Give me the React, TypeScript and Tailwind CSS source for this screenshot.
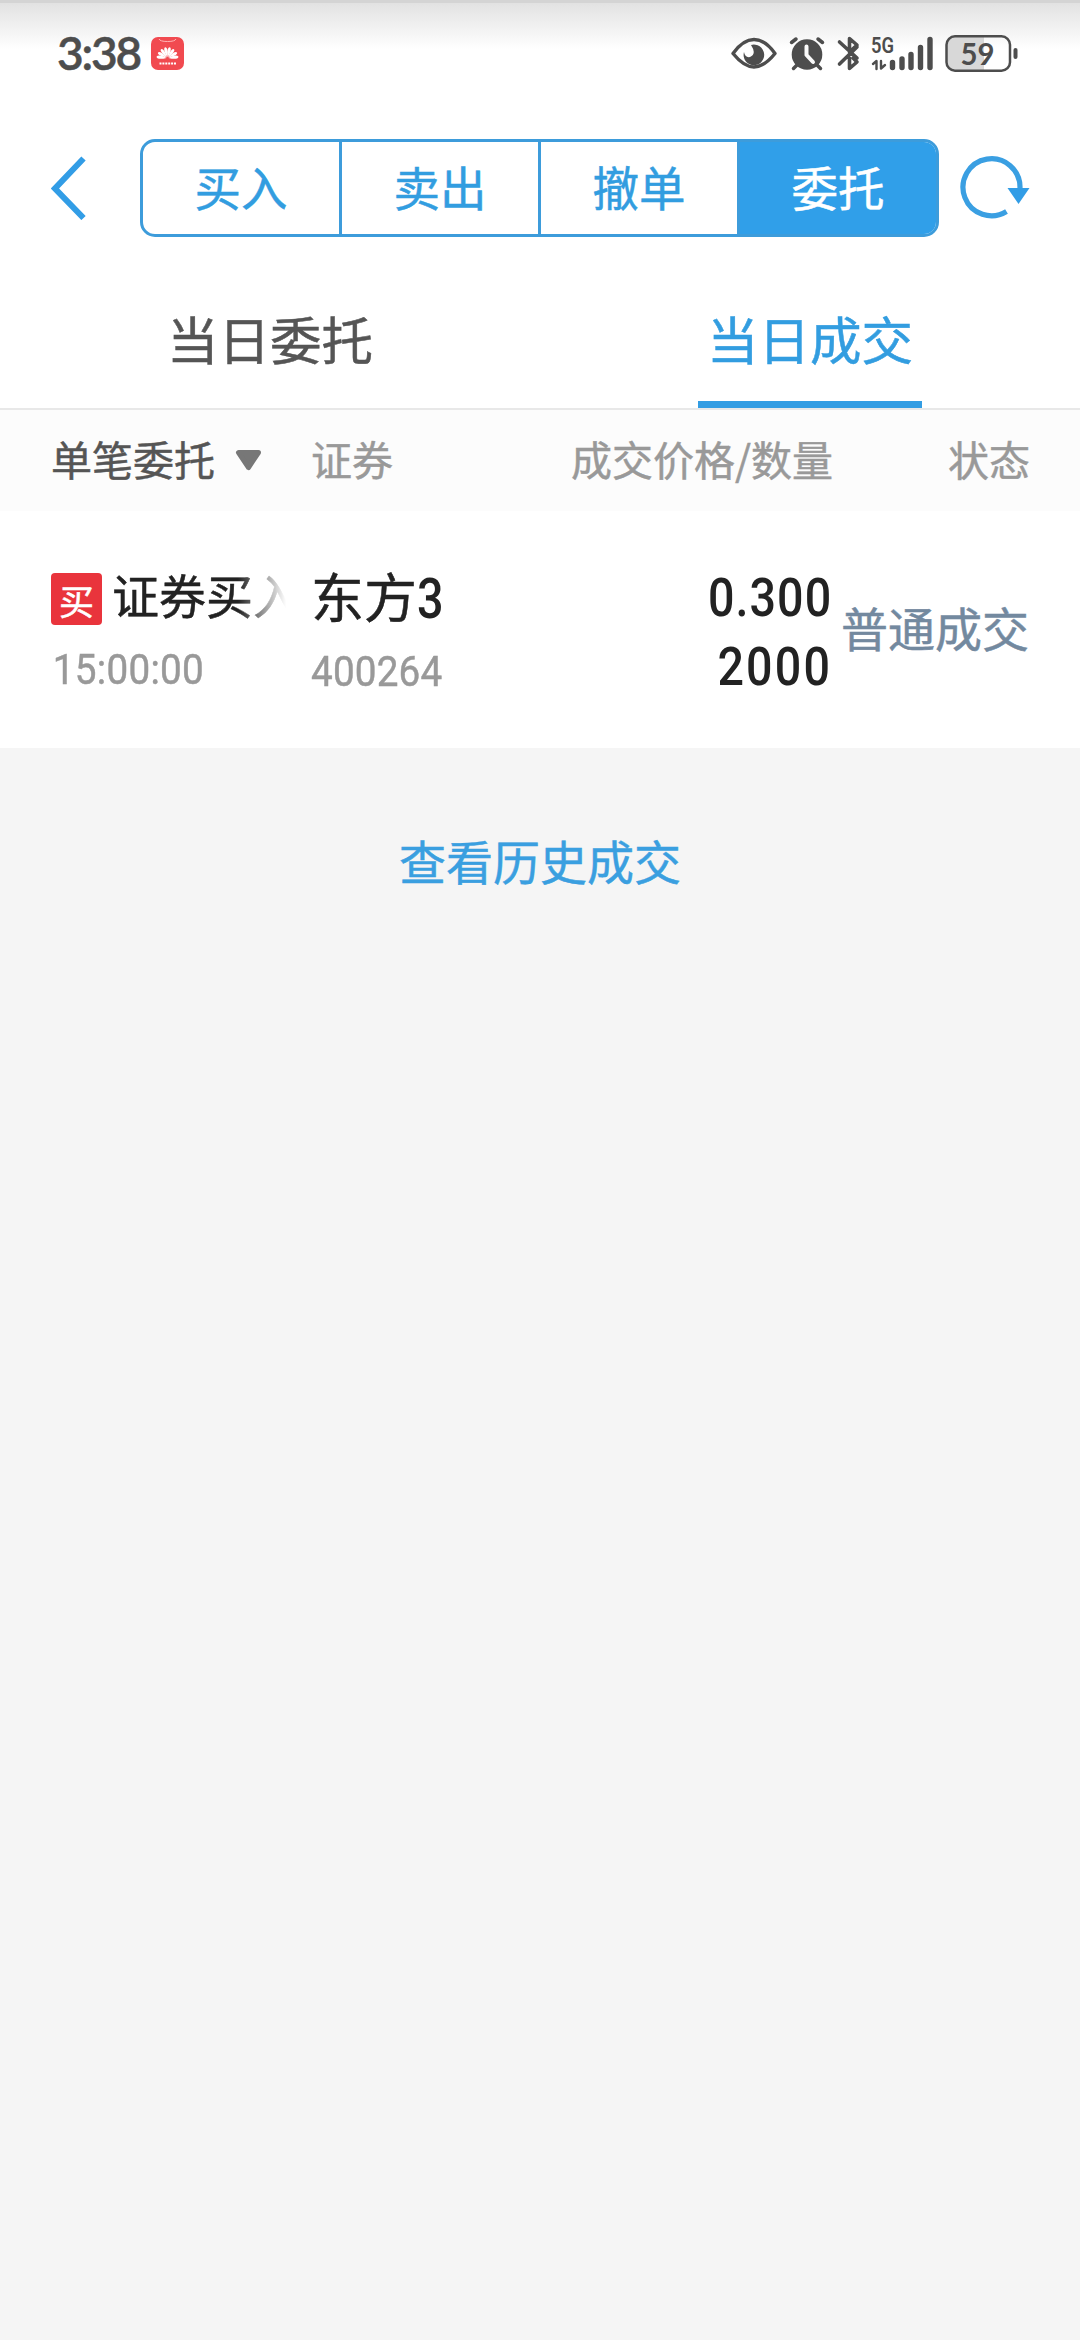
import React from "react";

const segments = ["买入", "卖出", "撤单", "委托"];

function StatusBar() {
  return (
    <div className="flex h-[103px] items-center border-t-[3px] border-[#d4d4d4] bg-linear-to-b from-[#e2e2e2] to-white to-[46px] pr-[60px] pl-[57px] text-[#4d4d4d]">
      <span className="w-[94px] font-['Lato'] text-[46px] leading-none font-semibold tracking-[-2.2px] whitespace-nowrap">3:38</span>
      <svg className="h-[33px] w-[33px]" viewBox="0 0 33 33">
        <rect width="33" height="33" rx="7" fill="#f14a50" />
        <path d="M8 2Q9 4.500 16.500 4.500T25 2" fill="none" stroke="#ffb5b5" strokeWidth="1" />
        <g fill="#fff">
          {[-84, -60, -36, -12, 12, 36, 60, 84].map((a) => (
            <path key={a} d="M16.500 21Q14.200 15 15.300 12Q16.500 10 17.700 12Q18.800 15 16.500 21Z" transform={`rotate(${a} 16.500 21) translate(0 -1)`} />
          ))}
        </g>
        <path d="M8.500 26.500H25" stroke="#fff" strokeWidth="2" strokeDasharray="2 .9" />
      </svg>
      <svg className="ml-auto h-[38px] w-[290px]" viewBox="730 34 290 38" fill="none" stroke="#4d4d4d" strokeLinecap="round" strokeLinejoin="round">
        <path d="M733 53.500Q743 39.500 754 39.500T775 53.500Q764 67 754 67T733 53.500Z" strokeWidth="3.400" />
        <path d="M751 45A10.300 10.300 0 1 1 744 52Q745 58 750 57Q757 54 751 45Z" fill="#4d4d4d" stroke="none" />
        <circle cx="807" cy="54.500" r="15.300" fill="#4d4d4d" stroke="none" />
        <path d="M791.500 42.500L796 39M822.500 42.500L818 39M797 65L793.500 68.500M817 65L820.500 68.500" strokeWidth="3.500" />
        <path d="M806.500 46.500V55L813 62" stroke="#fafafa" strokeWidth="4" />
        <path d="M839.500 42L857 58M839.500 64L857 47M849.500 51V38.500L857 45L849.500 52M849.500 58V68.500L857 62L853 58" strokeWidth="3.600" />
        <path d="M892.500 62.500V67.500M902 59V67.500M911 54.500V67.500M920.500 47.500V67.500M930 39.500V67.500" strokeWidth="5.400" />
        <path d="M873 64L876.500 61V69M881 61V68.500L885 65" strokeWidth="2.400" />
        <path d="M955 37H984V70H955Q947 70 947 62V45Q947 37 955 37Z" fill="#d8d8d8" stroke="none" />
        <rect x="946.500" y="36.300" width="63.500" height="34.400" rx="8.500" strokeWidth="2.500" />
        <path d="M1015.500 50V57" strokeWidth="4" />
        <text x="871" y="53" className="font-['Roboto']" fontSize="22" fontWeight="600" textLength="23" lengthAdjust="spacingAndGlyphs" fill="#4d4d4d" stroke="none">5G</text>
        <text x="977.500" y="64.500" className="font-['Lato']" fontSize="31" fontWeight="700" textAnchor="middle" textLength="34" lengthAdjust="spacingAndGlyphs" fill="#4d4d4d" stroke="none">59</text>
      </svg>
    </div>
  );
}

function NavBar() {
  return (
    <div className="flex h-[170px] items-center pl-[51px]">
      <svg className="h-[64px] w-[36px]" viewBox="0 0 36 64" fill="none" stroke="#329de6" strokeWidth="6">
        <path d="M32.500 2.500L4 32.500L32.500 62" />
      </svg>
      <div className="ml-[53px] flex h-[98px] w-[799px] overflow-hidden rounded-[15px] border-[3px] border-[#3d9cdb]">
        {segments.map((label, i) => (
          <div
            key={label}
            className={
              "flex flex-1 items-center justify-center pb-[4px] text-[46.500px] leading-none " +
              (i === 3 ? "bg-[#309fe9] text-white" : "border-r-[3px] border-[#3d9cdb] text-[#329de0]")
            }
          >
            {label}
          </div>
        ))}
      </div>
      <svg className="ml-[21px] h-[66px] w-[72px]" viewBox="0 0 72 66">
        <path d="M46.500 56.500A28.500 28.500 0 1 1 60 33" fill="none" stroke="#3a9fe2" strokeWidth="5.200" />
        <path d="M47.500 33H69.500L58.500 49Z" fill="#329de6" />
      </svg>
    </div>
  );
}

export default function App() {
  return (
    <div className="min-h-[2340px] w-[1080px] bg-[#f5f5f5] font-['Noto_Sans_CJK_SC',sans-serif] [-webkit-text-stroke-width:0.5px]">
      <div className="bg-white">
        <StatusBar />
        <NavBar />
        <div className="grid h-[137px] grid-cols-2 border-b-2 border-[#e8e8e8] text-[51.500px] leading-none text-[#555]">
          <div className="flex items-center justify-center pb-[6px]">当日委托</div>
          <div className="flex flex-col items-center text-[#329de0]">
            <div className="flex flex-1 items-center pt-px">当日成交</div>
            <div className="h-[7px] w-[224px] bg-[#339de3]" />
          </div>
        </div>
        <div className="flex h-[101px] items-center bg-[#fcfcfc] pr-[50px] pb-[5px] pl-[51px] text-[41px] leading-none text-[#999]">
          <div className="flex w-[260px] items-center text-[#555]">
            单笔委托
            <svg className="mt-[3px] ml-[20px] h-[22px] w-[28px]" viewBox="0 0 28 22">
              <path d="M3.500 3.500H23.500L13.500 18.500Z" fill="#777" stroke="#777" strokeWidth="5" strokeLinejoin="round" />
            </svg>
          </div>
          <div>证券</div>
          <div className="ml-auto">成交价格/数量</div>
          <div className="w-[197px] text-right">状态</div>
        </div>
        <div className="flex h-[237px] pr-[51px] pl-[51px] text-[#222]">
          <div className="w-[260px] pt-[54px]">
            <div className="flex items-start">
              <div className="mt-[8px] flex h-[52px] w-[51px] items-center justify-center rounded-sm bg-[#e9343c] text-[35px] leading-none text-white">买</div>
              <div className="ml-[10px] text-[47px] leading-[57px] whitespace-nowrap [mask-image:linear-gradient(to_right,#000_126px,transparent_174px)]">证券买入</div>
            </div>
            <div className="mt-[23px] w-fit origin-left scale-x-[.92] pl-[2px] font-['Roboto'] text-[42px] leading-[44px] tracking-[0.3px] text-[#999]">15:00:00</div>
          </div>
          <div className="pt-[56px]">
            <div className="text-[53px] leading-[56px]">
              东方<span className="inline-block origin-left scale-x-[.85] font-['Roboto'] text-[55px] leading-[56px] font-medium [-webkit-text-stroke-width:0]">3</span>
            </div>
            <div className="mt-[23px] w-fit origin-left scale-x-[.92] font-['Roboto'] text-[42px] leading-[44px] tracking-[0.2px] text-[#999]">400264</div>
          </div>
          <div className="ml-auto origin-right scale-x-[.88] pt-[53px] text-right font-['Roboto'] text-[53px] leading-[69px] font-medium [-webkit-text-stroke-width:0]">
            <div className="tracking-[1.200px]">0.300</div>
            <div className="tracking-[2.500px]">2000</div>
          </div>
          <div className="flex w-[197px] justify-end pt-[83px] text-[47px] leading-[66px] whitespace-nowrap text-[#73899f]">普通成交</div>
        </div>
      </div>
      <div className="pt-[77px] text-center text-[47px] leading-[70px] text-[#3a9fe0]">查看历史成交</div>
    </div>
  );
}
